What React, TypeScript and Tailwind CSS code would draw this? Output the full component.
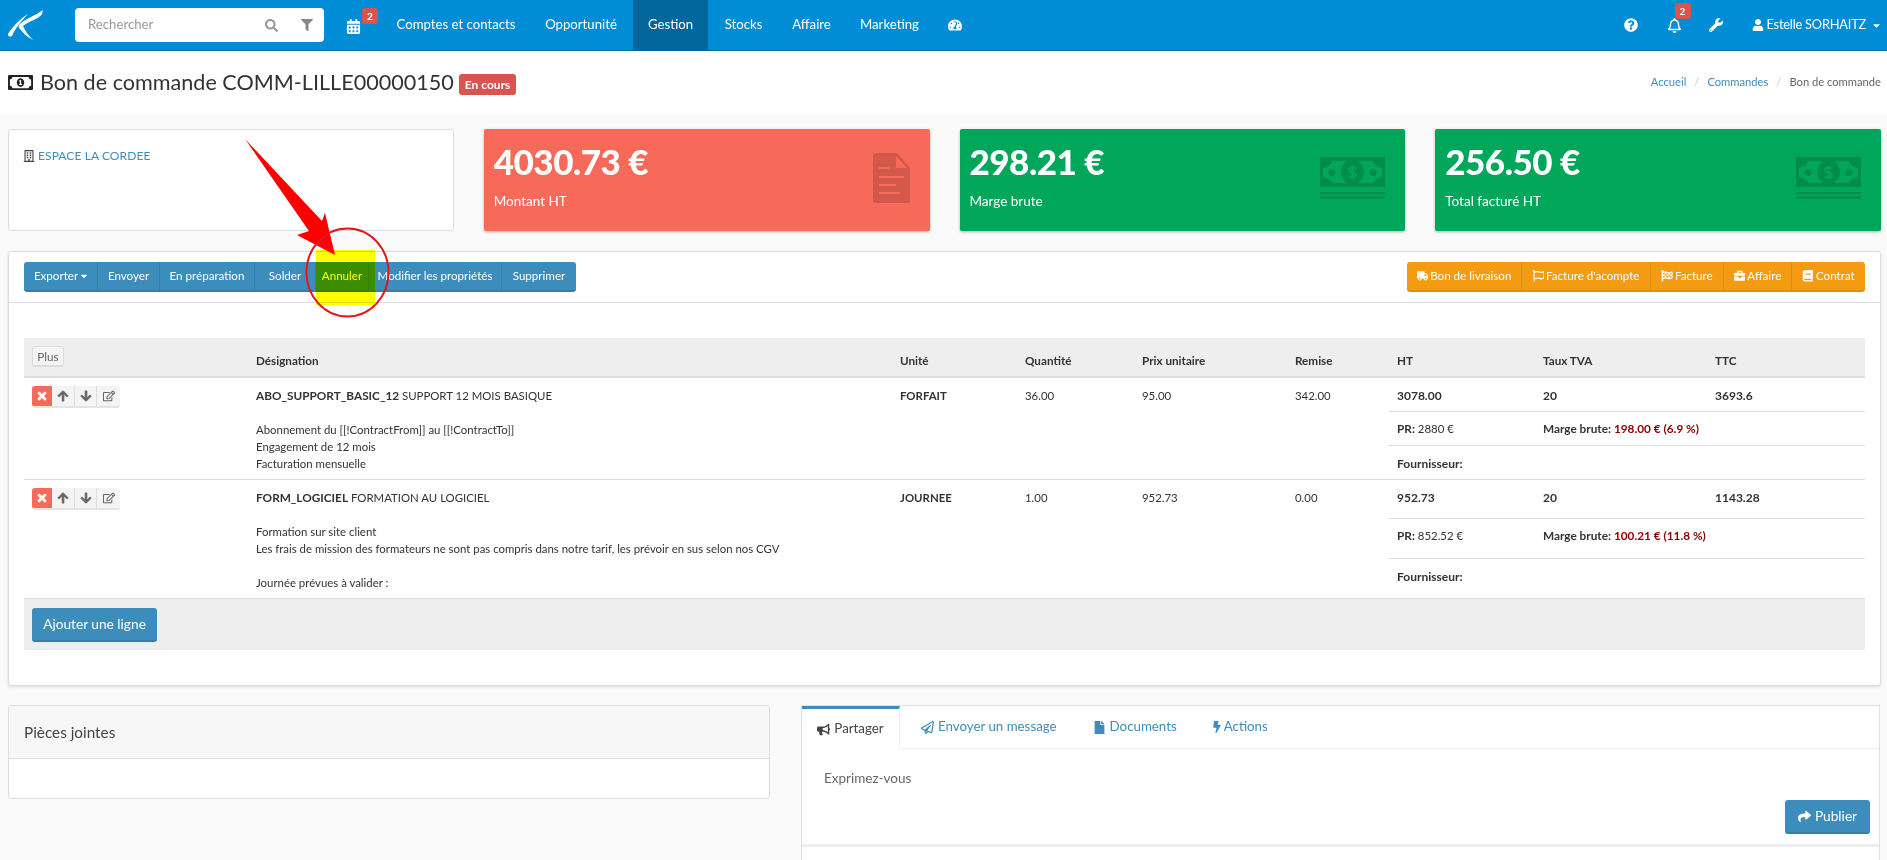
import {
  FaArrowDown,
  FaArrowUp,
  FaBolt,
  FaBook,
  FaBriefcase,
  FaBullhorn,
  FaCalendarAlt,
  FaCaretDown,
  FaFile,
  FaFilter,
  FaFlagCheckered,
  FaQuestionCircle,
  FaRegBell,
  FaRegBuilding,
  FaRegEdit,
  FaRegFlag,
  FaRegMoneyBillAlt,
  FaRegPaperPlane,
  FaSearch,
  FaShare,
  FaTachometerAlt,
  FaTimes,
  FaTruck,
  FaUser,
  FaWrench,
} from "react-icons/fa";

function Logo() {
  return (
    <svg width="36" height="31" viewBox="0 0 36 31" className="text-white">
      <path d="M20 4C12 9 4 17 0 24c0 3 2 3 4 2C7 19 13 11 20 4z" fill="currentColor" />
      <path d="M35 0C27 6 18 8 11 15c-1 2 0 3 1 4 3 4 7 8 13 11-4-4-8-9-10-14 6-5 16-7 19-12z" fill="currentColor" />
    </svg>
  );
}

function MoneyIcon() {
  return (
    <svg width="65" height="42" viewBox="0 0 65 42" className="text-black/15">
      <path
        fillRule="evenodd"
        fill="currentColor"
        d="M0 0h65v30H0zM12 4c0 3-4 6-9 7v9c5 1 9 4 9 6h15c-4-3-6-6-6-11s2-8 6-11zM38 4c4 3 6 7 6 11s-2 8-6 11h15c0-2 4-5 9-6v-9c-5-1-9-4-9-7z"
      />
      <circle cx="12" cy="15.500" r="3.500" fill="currentColor" />
      <circle cx="53" cy="15.500" r="3.500" fill="currentColor" />
      <path d="M36 11.500c-1-1.500-7-1.500-7 1.500s7 2 7 5-6 3-7 1.500M32.500 8.500v14" fill="none" stroke="#00a65a" strokeWidth="2" />
      <path d="M0 35h65v2H0zM0 39.500h65v2H0z" fill="currentColor" />
    </svg>
  );
}

function DocIcon() {
  return (
    <svg width="37" height="50" viewBox="0 0 37 50" className="text-black/15">
      <path
        fillRule="evenodd"
        fill="currentColor"
        d="M2 0h22l13 15v33a2 2 0 0 1-2 2H2a2 2 0 0 1-2-2V2a2 2 0 0 1 2-2zM23 3v12h11zM6 14v2h10v-2zM6 23v2h25v-2zM6 31v2h17v-2zM6 39v2h21v-2z"
      />
    </svg>
  );
}

type StatProps = {
  value: string;
  label: string;
  color: string;
  icon: React.ReactNode;
};

function Stat({ value, label, color, icon }: StatProps) {
  return (
    <div className={`h-[102px] rounded-[2px] shadow-[0_1px_3px_rgba(0,0,0,0.3)] flex justify-between pl-[10px] text-white ${color}`}>
      <div>
        <div className="text-[35px] leading-[40px] font-black mt-[12px] tracking-[-0.5px]">{value}</div>
        <div className="text-[13.500px] leading-[20px] mt-[10px]">{label}</div>
      </div>
      {icon}
    </div>
  );
}

function RowActions() {
  return (
    <div className="flex h-[22px] w-[88px] rounded-[3px] overflow-hidden border-b-2 border-[#e4e4e4] bg-[#f4f4f4] text-[#666]">
      <div className="w-[20px] bg-[#f76958] text-white flex items-center justify-center text-[12px]">
        <FaTimes className="stroke-[30px]" />
      </div>
      <div className="w-[23px] border-r border-[#ddd] flex items-center justify-center text-[12px]">
        <FaArrowUp className="stroke-[30px]" />
      </div>
      <div className="w-[22px] border-r border-[#ddd] flex items-center justify-center text-[12px]">
        <FaArrowDown className="stroke-[30px]" />
      </div>
      <div className="flex-1 flex items-center justify-center text-[12px]">
        <FaRegEdit />
      </div>
    </div>
  );
}

const tableCols = "grid grid-cols-[224px_644px_125px_117px_153px_102px_146px_172px_158px]";

type LineProps = {
  code: string;
  name: string;
  desc: string[];
  unit: string;
  qty: string;
  price: string;
  discount: string;
  ht: string;
  ttc: string;
  pr: string;
  margin: string;
  subHeights: string[];
};

function Line({ code, name, desc, unit, qty, price, discount, ht, ttc, pr, margin, subHeights }: LineProps) {
  return (
    <div className="border-b border-[#ddd] relative">
      <div className={`${tableCols} text-[11.400px] leading-[17px]`}>
        <div className="pl-2 pt-2">
          <RowActions />
        </div>
        <div className="pl-2 pt-[9px] pb-[7px]">
          <div>
            <b className="text-[11.800px]">{code}</b> {name}
          </div>
          <div className="h-[17px]" />
          {desc.map((d, i) => (
            <div key={i} className="h-[17px]">
              {d}
            </div>
          ))}
        </div>
        <div className="pl-2 pt-[9px] font-bold">{unit}</div>
        <div className="pl-2 pt-[9px]">{qty}</div>
        <div className="pl-2 pt-[9px]">{price}</div>
        <div className="pl-2 pt-[9px]">{discount}</div>
        <div className="col-span-3 flex flex-col">
          <div className={`grid grid-cols-[146px_172px_158px] pt-[9px] text-[12px] font-bold ${subHeights[0]}`}>
            <div className="pl-2">{ht}</div>
            <div className="pl-2">20</div>
            <div className="pl-2">{ttc}</div>
          </div>
          <div className={`grid grid-cols-[146px_330px] pt-2 border-t border-[#ddd] ${subHeights[1]}`}>
            <div className="pl-2">
              <b className="text-[11.800px]">PR:</b> {pr}
            </div>
            <div className="pl-2 text-[11.800px] font-bold">
              Marge brute: <span className="text-[#8b0000]">{margin}</span>
            </div>
          </div>
          <div className="flex-1 border-t border-[#ddd] pt-[9px] pl-2 text-[12px] font-bold">Fournisseur:</div>
        </div>
      </div>
    </div>
  );
}

const navLinks = [
  { label: "Comptes et contacts", w: "w-[146px]" },
  { label: "Opportunité", w: "w-[104px]" },
  { label: "Gestion", w: "w-[75px]", active: true },
  { label: "Stocks", w: "w-[71px]" },
  { label: "Affaire", w: "w-[65px]" },
  { label: "Marketing", w: "w-[91px]" },
];

const mainActions = [
  { label: "Envoyer", w: "w-[62px]" },
  { label: "En préparation", w: "w-[95px]" },
  { label: "Solder", w: "w-[61px]" },
  { label: "Annuler", w: "w-[53px]" },
  { label: "Modifier les propriétés", w: "w-[133px]" },
  { label: "Supprimer", w: "w-[74px]" },
];

const docActions = [
  { label: "Bon de livraison", w: "w-[115px]", icon: <FaTruck /> },
  { label: "Facture d'acompte", w: "w-[129px]", icon: <FaRegFlag /> },
  { label: "Facture", w: "w-[73px]", icon: <FaFlagCheckered /> },
  { label: "Affaire", w: "w-[68px]", icon: <FaBriefcase /> },
  { label: "Contrat", w: "w-[73px]", icon: <FaBook /> },
];

export default function App() {
  return (
    <div className="relative h-[860px] overflow-hidden bg-[#fafafa] text-[12px] text-[#333] font-['Lato','Liberation_Sans',sans-serif]">
      {/* Navbar */}
      <nav className="h-[51px] bg-[#008dd5] border-b border-[#006a9e] flex items-center text-white text-[13.200px]">
        <div className="w-[75px] pl-[8px] flex items-center">
          <Logo />
        </div>
        <div className="w-[249px] h-[34px] bg-white rounded-[4px] flex items-center pl-[13px] pr-[11px] text-[#999]">
          <span className="flex-1">Rechercher</span>
          <FaSearch className="text-[13px] mr-[23px]" />
          <FaFilter className="text-[12px] text-[#888]" />
        </div>
        <div className="relative w-[58px] ml-[1px] h-full flex items-center justify-center">
          <FaCalendarAlt className="text-[15px] mt-[3px] -ml-[1px]" />
          <span className="absolute left-[37px] top-[8px] h-[16px] w-[16px] rounded-[3px] bg-[#d9534f] text-[10px] leading-[16px] text-center font-bold">2</span>
        </div>
        {navLinks.map((l) => (
          <div key={l.label} className={`h-full flex items-center justify-center ${l.w} ${l.active ? "bg-[#00669b]" : ""}`}>
            {l.label}
          </div>
        ))}
        <FaTachometerAlt className="ml-[13px] text-[14px]" />
        <div className="flex-1" />
        <FaQuestionCircle className="text-[14px] mr-[29px]" />
        <div className="relative mr-[27px]">
          <FaRegBell className="text-[15px]" />
          <span className="absolute left-[8px] -top-[15px] h-[16px] w-[16px] rounded-[3px] bg-[#d9534f] text-[10px] leading-[16px] text-center font-bold">2</span>
        </div>
        <FaWrench className="text-[14px] mr-[29px]" />
        <FaUser className="text-[12px] mr-[3px]" />
        <span className="mr-[5px] text-[12.800px] tracking-[-0.2px]">Estelle SORHAITZ</span>
        <FaCaretDown className="text-[11px] mr-[5px]" />
      </nav>

      {/* Page title */}
      <header className="h-[63px] bg-white flex items-center pl-[8px] pr-[6px]">
        <FaRegMoneyBillAlt className="text-[25px] text-[#222] mr-[7px]" />
        <h1 className="text-[21.600px] leading-[30px] text-[#333] -mt-[2px]">Bon de commande COMM-LILLE00000150</h1>
        <span className="ml-[5px] mt-[3px] bg-[#d9534f] text-white text-[12px] font-bold rounded-[3px] h-[21px] leading-[21px] px-[6px]">En cours</span>
        <div className="ml-auto flex text-[11.200px] gap-[8px]">
          <a className="text-[#3c8dbc]">Accueil</a>
          <span className="text-[#ccc]">/</span>
          <a className="text-[#3c8dbc]">Commandes</a>
          <span className="text-[#ccc]">/</span>
          <span className="text-[#666]">Bon de commande</span>
        </div>
      </header>

      <main className="pl-[8px] pr-[6px] pt-[15px]">
        {/* Stats */}
        <div className="grid grid-cols-4 gap-[30px]">
          <div className="h-[102px] bg-white rounded-[3px] border border-[#ddd] pl-[14px] pt-[17px] leading-[17px]">
            <span className="inline-flex items-center gap-[3px] text-[#3c8dbc] tracking-[0.1px]">
              <FaRegBuilding className="text-[#444]" />
              ESPACE LA CORDEE
            </span>
          </div>
          <Stat value="4030.73 €" label="Montant HT" color="bg-[#f76958]" icon={<div className="mt-[24px] mr-[20px]"><DocIcon /></div>} />
          <Stat value="298.21 €" label="Marge brute" color="bg-[#00a65a]" icon={<div className="mt-[28px] mr-[20px]"><MoneyIcon /></div>} />
          <Stat value="256.50 €" label="Total facturé HT" color="bg-[#00a65a]" icon={<div className="mt-[28px] mr-[20px]"><MoneyIcon /></div>} />
        </div>

        {/* Order panel */}
        <section className="mt-[20px] h-[435px] bg-white rounded-[3px] border border-[#ddd] shadow-sm">
          <div className="h-[51px] border-b border-[#ddd] flex justify-between items-start pt-[10px] pl-[15px] pr-[15px] text-[11.600px]">
            <div className="flex h-[30px] rounded-[3px] overflow-hidden bg-[#3c8dbc] border-b-2 border-[#367fa9] text-white">
              <div className="w-[74px] border-r border-[#367fa9] flex items-center justify-center gap-[1px] pl-[2px]">
                Exporter <FaCaretDown className="text-[10px]" />
              </div>
              {mainActions.map((a) => (
                <div key={a.label} className={`${a.w} border-r border-[#367fa9] last:border-r-0 flex items-center justify-center whitespace-nowrap`}>
                  {a.label}
                </div>
              ))}
            </div>
            <div className="flex h-[30px] rounded-[3px] overflow-hidden bg-[#f39c12] border-b-2 border-[#e08e0b] text-white">
              {docActions.map((a) => (
                <div key={a.label} className={`${a.w} border-r border-[#e08e0b] last:border-r-0 flex items-center justify-center gap-[2px] whitespace-nowrap`}>
                  {a.icon}
                  {a.label}
                </div>
              ))}
            </div>
          </div>

          <div className="mx-[15px] mt-[35px]">
            <div className={`${tableCols} h-[40px] bg-[#eee] border-b-2 border-[#ddd] font-bold text-[11.700px]`}>
              <div className="pl-2 pt-[8px]">
                <div className="w-[32px] h-[21px] rounded-[3px] bg-[#f4f4f4] border border-[#ddd] border-b-2 font-normal text-[#666] text-center leading-[18px]">Plus</div>
              </div>
              {["Désignation", "Unité", "Quantité", "Prix unitaire", "Remise", "HT", "Taux TVA", "TTC"].map((h) => (
                <div key={h} className="pl-2 pt-[14px] leading-[17px]">
                  {h}
                </div>
              ))}
            </div>
            <Line
              code="ABO_SUPPORT_BASIC_12"
              name="SUPPORT 12 MOIS BASIQUE"
              desc={["Abonnement du [[!ContractFrom]] au [[!ContractTo]]", "Engagement de 12 mois", "Facturation mensuelle"]}
              unit="FORFAIT"
              qty="36.00"
              price="95.00"
              discount="342.00"
              ht="3078.00"
              ttc="3693.6"
              pr="2880 €"
              margin="198.00 € (6.9 %)"
              subHeights={["h-[33px]", "h-[34px]"]}
            />
            <Line
              code="FORM_LOGICIEL"
              name="FORMATION AU LOGICIEL"
              desc={[
                "Formation sur site client",
                "Les frais de mission des formateurs ne sont pas compris dans notre tarif, les prévoir en sus selon nos CGV",
                "",
                "Journée prévues à valider :",
              ]}
              unit="JOURNEE"
              qty="1.00"
              price="952.73"
              discount="0.00"
              ht="952.73"
              ttc="1143.28"
              pr="852.52 €"
              margin="100.21 € (11.8 %)"
              subHeights={["h-[38px]", "h-[40px]"]}
            />
            <div className="h-[51px] bg-[#eee] pl-2 pt-[9px]">
              <div className="w-[125px] h-[34px] rounded-[3px] bg-[#3c8dbc] border-b-2 border-[#367fa9] text-white text-[13.700px] flex items-center justify-center">Ajouter une ligne</div>
            </div>
          </div>
        </section>

        {/* Bottom panels */}
        <div className="mt-[19px] grid grid-cols-[762px_1fr] gap-[31px]">
          <div className="h-[94px] bg-white rounded-[3px] border border-[#ddd]">
            <div className="h-[53px] bg-[#f7f7f7] border-b border-[#ddd] flex items-center pl-[15px] text-[15.300px] text-[#444]">Pièces jointes</div>
          </div>
          <div className="h-[160px] bg-white border-t border-l border-r border-[#e0e0e0] mr-[1px]">
            <div className="flex h-[43px] border-b border-[#f0f0f0] text-[13.300px] text-[#3c8dbc]">
              <div className="w-[98px] -mb-px bg-white border-t-[3px] border-[#3c8dbc] border-r border-r-[#f0f0f0] flex items-center justify-center gap-[4px] text-[#444]">
                <FaBullhorn className="text-[13px]" />
                Partager
              </div>
              <div className="flex items-center gap-[4px] pl-[21px]">
                <FaRegPaperPlane className="text-[13px]" />
                Envoyer un message
              </div>
              <div className="flex items-center gap-[4px] pl-[36px]">
                <FaFile className="text-[13px]" />
                Documents
              </div>
              <div className="flex items-center gap-[1px] pl-[34px]">
                <FaBolt className="text-[12px]" />
                Actions
              </div>
            </div>
            <div className="pl-[22px] pt-[20px] text-[13.500px] leading-[18px] text-[#666]">Exprimez-vous</div>
            <div className="flex justify-end pr-[9px] mt-[13px]">
              <div className="w-[85px] h-[34px] rounded-[3px] bg-[#3c8dbc] border-b-2 border-[#367fa9] text-white text-[13.700px] flex items-center justify-center gap-[4px]">
                <FaShare className="text-[13px]" />
                Publier
              </div>
            </div>
            <div className="mt-[10px] h-[3px] bg-[#eee]" />
          </div>
        </div>
      </main>

      {/* Screenshot annotations: arrow, highlight, circle */}
      <div className="absolute left-[316px] top-[250px] w-[59px] h-[55px] bg-[#ffff00] mix-blend-multiply" />
      <svg className="absolute left-0 top-0 pointer-events-none" width="420" height="330">
        <path d="M245 139L322 221L325 213L335 255L297 235L309 231Z" fill="#ff0000" />
        <ellipse cx="347.500" cy="272.500" rx="41" ry="44" fill="none" stroke="#e4141e" strokeWidth="2" />
      </svg>
    </div>
  );
}
